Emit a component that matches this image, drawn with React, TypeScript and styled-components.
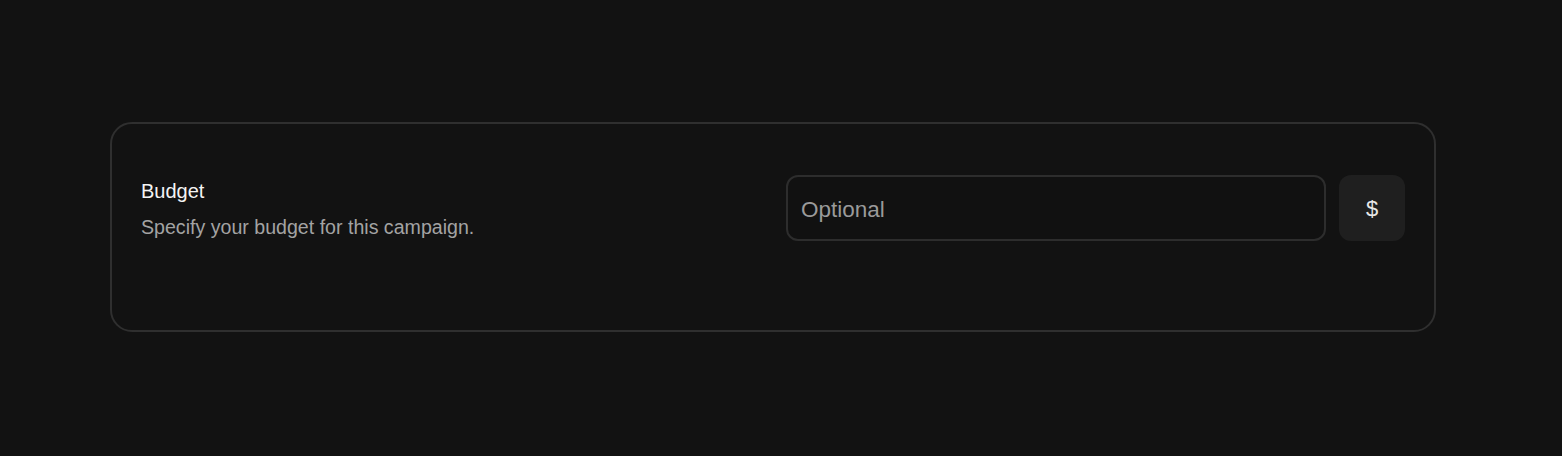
import React from "react";
import styled, { createGlobalStyle } from "styled-components";

const Global = createGlobalStyle`
  html, body { margin: 0; padding: 0; background: #121212; }
  body { font-family: "Liberation Sans", Arial, sans-serif; -webkit-font-smoothing: antialiased; }
  * { box-sizing: border-box; }
`;

const Page = styled.div`
  width: 1562px;
  height: 456px;
  padding: 122px 126px 0 110px;
`;

const Card = styled.section`
  border: 2px solid #2f2f2f;
  border-radius: 22px;
  background: #121212;
  height: 210px;
  padding: 51px 29px 0 29px;
  display: flex;
  align-items: flex-start;
  justify-content: space-between;
`;

const TextCol = styled.div`
  display: flex;
  flex-direction: column;
  gap: 12px;
  padding-top: 4px;
`;

const Title = styled.div`
  color: #f4f4f4;
  font-size: 20px;
  font-weight: 400;
  line-height: 24px;
`;

const Desc = styled.div`
  color: #a3a3a3;
  font-size: 19.6px;
  line-height: 24px;
`;

const Controls = styled.div`
  display: flex;
  gap: 13px;
  align-items: center;
`;

const Input = styled.input`
  width: 540px;
  height: 66px;
  border: 2px solid #2d2d2d;
  border-radius: 12px;
  background: #111111;
  padding: 3px 13px 0 13px;
  color: #eee;
  font-family: "Liberation Sans", Arial, sans-serif;
  font-size: 22.5px;
  outline: none;
  &::placeholder { color: #9a9a9a; }
`;

const IconButton = styled.button`
  width: 66px;
  height: 66px;
  border: none;
  border-radius: 12px;
  background: #1f1f1f;
  color: #e8e8e8;
  font-family: "Liberation Sans", Arial, sans-serif;
  font-size: 22px;
  display: flex;
  align-items: center;
  justify-content: center;
  padding: 2px 0 0 0;
`;

export default function App() {
  return (
    <>
      <Global />
      <Page>
        <Card>
          <TextCol>
            <Title>Budget</Title>
            <Desc>Specify your budget for this campaign.</Desc>
          </TextCol>
          <Controls>
            <Input placeholder="Optional" />
            <IconButton>$</IconButton>
          </Controls>
        </Card>
      </Page>
    </>
  );
}
